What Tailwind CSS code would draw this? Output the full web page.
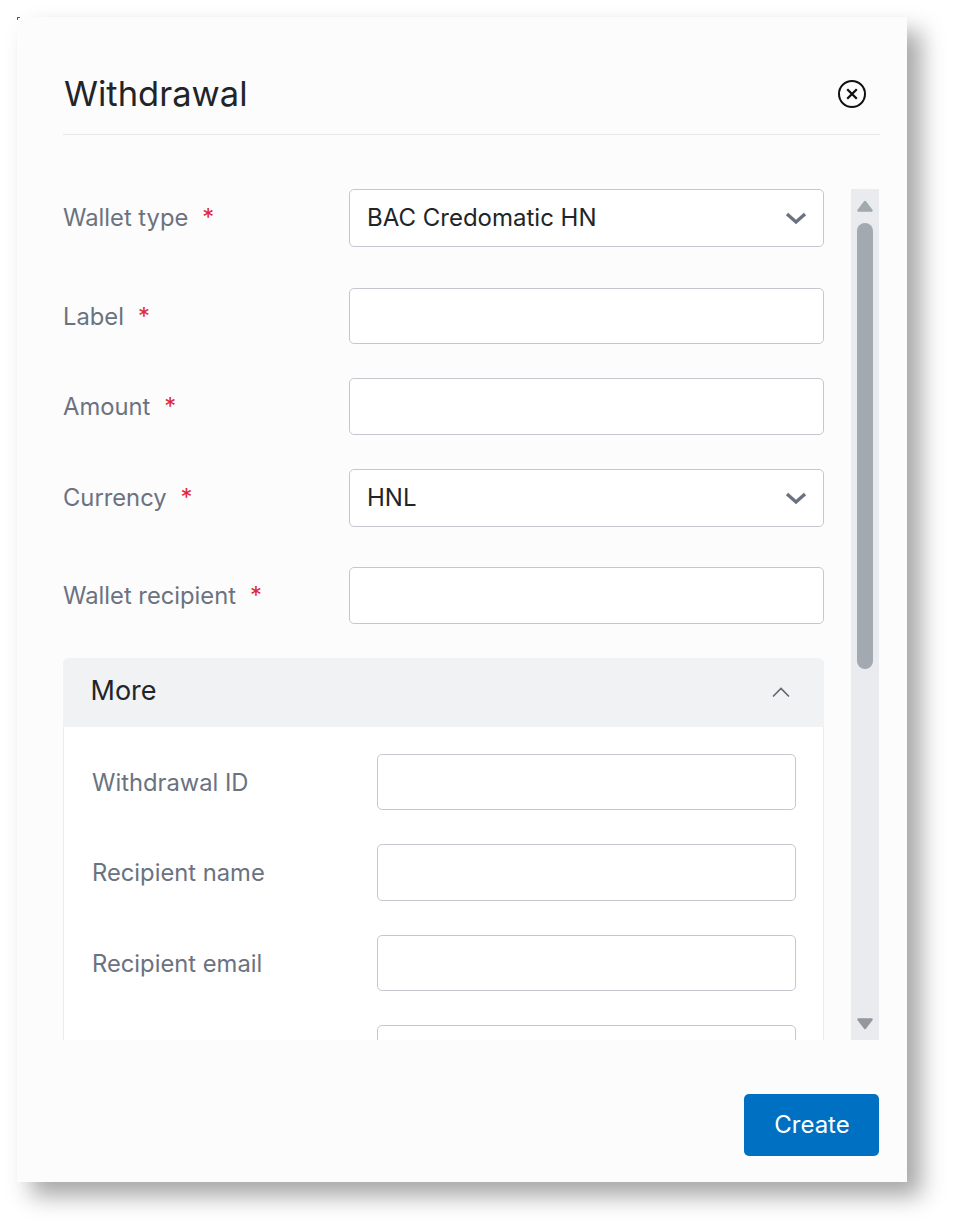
<!DOCTYPE html>
<html lang="en">
<head>
    <meta charset="UTF-8">
    <title>Withdrawal</title>
    <script src="https://cdn.jsdelivr.net/npm/@tailwindcss/browser@4"></script>
</head>
<body class="bg-white font-['Inter',sans-serif] w-[955px] h-[1230px] overflow-hidden">
    <div class="pt-[17px] pl-[17px]">
        <!-- Modal -->
        <div class="relative w-[890px] h-[1165px] bg-[#fcfcfc] shadow-[14px_14px_22px_rgba(0,0,0,0.35)] flex flex-col">
            <!-- Corner speck from the capture -->
            <div class="absolute left-0 top-0 w-[3px] h-[3px] border-l border-t border-[#555b63]"></div>

            <!-- Header -->
            <div class="ml-[46px] mr-[27px] h-[118px] pt-[35px] border-b border-[#e5e7eb] flex items-center justify-between shrink-0">
                <h1 class="text-[34.5px] leading-none text-[#212529] pl-px mt-[2px]">Withdrawal</h1>
                <svg class="w-[30px] h-[30px] mr-[13px] mt-[1px]" viewBox="0 0 30 30" fill="none" stroke="#111" stroke-width="2">
                    <circle cx="15" cy="15" r="13"/>
                    <path d="M10.2 10.2l9.6 9.6M19.8 10.2l-9.6 9.6" stroke-width="2.3"/>
                </svg>
            </div>

            <!-- Body -->
            <div class="mt-[54px] ml-[46px] mr-[28px] h-[851px] flex justify-between overflow-hidden shrink-0">
                <div class="w-[761px]">
                    <div class="flex items-center mb-[41px]">
                        <label class="w-[286px] text-[23.75px] text-[#6b7280]">Wallet type<span class="text-[#e0283c] ml-[14px]">*</span></label>
                        <div class="flex-1 h-[58px] bg-white border border-[#c4c8ce] rounded-[5px] flex items-center justify-between pl-[17px] pr-[16px]">
                            <span class="text-[24px] text-[#212529]">BAC Credomatic HN</span>
                            <svg class="w-[22px] h-[14px]" viewBox="0 0 22 14" fill="none" stroke="#6b7280" stroke-width="3.4"><path d="M2 3l9 8 9-8"/></svg>
                        </div>
                    </div>
                    <div class="flex items-center mb-[34px]">
                        <label class="w-[286px] pt-[2px] text-[23.75px] text-[#6b7280]">Label<span class="text-[#e0283c] ml-[14px]">*</span></label>
                        <div class="flex-1 h-[56.4px] bg-white border border-[#c4c8ce] rounded-[5px]"></div>
                    </div>
                    <div class="flex items-center mb-[34px]">
                        <label class="w-[286px] text-[23.75px] text-[#6b7280]">Amount<span class="text-[#e0283c] ml-[14px]">*</span></label>
                        <div class="flex-1 h-[56.4px] bg-white border border-[#c4c8ce] rounded-[5px]"></div>
                    </div>
                    <div class="flex items-center mb-[40px]">
                        <label class="w-[286px] text-[23.75px] text-[#6b7280]">Currency<span class="text-[#e0283c] ml-[14px]">*</span></label>
                        <div class="flex-1 h-[58px] bg-white border border-[#c4c8ce] rounded-[5px] flex items-center justify-between pl-[17px] pr-[16px]">
                            <span class="text-[24px] text-[#212529]">HNL</span>
                            <svg class="w-[22px] h-[14px]" viewBox="0 0 22 14" fill="none" stroke="#6b7280" stroke-width="3.4"><path d="M2 3l9 8 9-8"/></svg>
                        </div>
                    </div>
                    <div class="flex items-center mb-[34px]">
                        <label class="w-[286px] pt-[2px] text-[23.75px] text-[#6b7280]">Wallet recipient<span class="text-[#e0283c] ml-[14px]">*</span></label>
                        <div class="flex-1 h-[57px] bg-white border border-[#c4c8ce] rounded-[5px]"></div>
                    </div>

                    <!-- More accordion -->
                    <div class="border-x border-[#e9ecef] bg-white rounded-t-[6px]">
                        <div class="-mx-px h-[69px] bg-[#f1f2f4] rounded-t-[6px] flex items-center justify-between pl-[27.5px] pr-[33.5px]">
                            <span class="text-[27px] text-[#212529] -mt-[3px]">More</span>
                            <svg class="w-[20px] h-[12px]" viewBox="0 0 20 12" fill="none" stroke="#5f6670" stroke-width="1.6"><path d="M2 10.5l8-8 8 8"/></svg>
                        </div>
                        <div class="pt-[27px] pl-[28px] pr-[27px] pb-[20px]">
                            <div class="flex items-center mb-[34px]">
                                <label class="w-[285px] pt-[2px] text-[23.75px] text-[#6b7280]">Withdrawal ID</label>
                                <div class="flex-1 h-[56.4px] bg-white border border-[#c4c8ce] rounded-[5px]"></div>
                            </div>
                            <div class="flex items-center mb-[34px]">
                                <label class="w-[285px] text-[23.75px] text-[#6b7280]">Recipient name</label>
                                <div class="flex-1 h-[56.4px] bg-white border border-[#c4c8ce] rounded-[5px]"></div>
                            </div>
                            <div class="flex items-center mb-[34px]">
                                <label class="w-[285px] pt-[2px] text-[23.75px] text-[#6b7280]">Recipient email</label>
                                <div class="flex-1 h-[56.4px] bg-white border border-[#c4c8ce] rounded-[5px]"></div>
                            </div>
                            <div class="flex items-center">
                                <div class="w-[285px]"></div>
                                <div class="flex-1 h-[56.4px] bg-white border border-[#c4c8ce] rounded-[5px]"></div>
                            </div>
                        </div>
                    </div>
                </div>

                <!-- Scrollbar -->
                <div class="w-[28px] h-full bg-[#e9ebef] flex flex-col items-center pt-[11px] pb-[10px]">
                    <svg class="w-[16px] h-[12px] shrink-0" viewBox="0 0 16 12" fill="#a2a9b0"><path d="M8 2L14.5 10.5H1.5z" stroke="#a2a9b0" stroke-width="2.4" stroke-linejoin="round"/></svg>
                    <div class="w-[16px] h-[446px] mt-[11px] bg-[#a2a9b0] rounded-full shrink-0"></div>
                    <svg class="w-[16px] h-[12px] mt-auto shrink-0" viewBox="0 0 16 12" fill="#93989f"><path d="M8 10L14.5 1.5H1.5z" stroke="#93989f" stroke-width="2.4" stroke-linejoin="round"/></svg>
                </div>
            </div>

            <!-- Footer -->
            <div class="flex justify-end mr-[28px] mt-[54px]">
                <button class="w-[135px] h-[62px] bg-[#0070c3] text-white text-[24px] rounded-[5px] pl-px">Create</button>
            </div>
        </div>
    </div>
</body>
</html>
